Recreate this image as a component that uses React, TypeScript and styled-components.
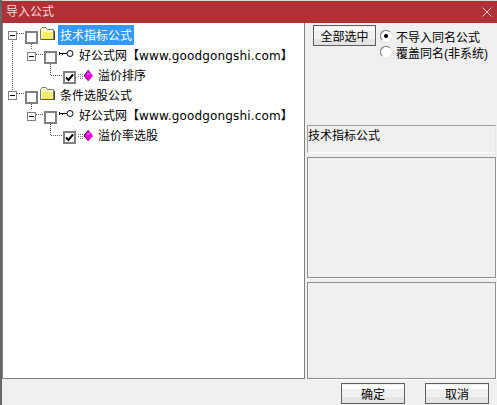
import React from "react";
import styled, { createGlobalStyle } from "styled-components";

const Global = createGlobalStyle`
  html, body { margin: 0; padding: 0; background: #f0f0f0; }
  body { font-family: "Liberation Sans", "Noto Sans CJK SC", sans-serif; font-size: 12px; color: #000; }
`;

const Window = styled.div`
  width: 497px;
  height: 405px;
  display: flex;
  flex-direction: column;
  overflow: hidden;
  background: #f0f0f0;
  border-left: 2px solid #666;
  box-sizing: border-box;
`;
const TopEdge = styled.div`
  height: 1px;
  flex: none;
  background: #d8d8d8;
`;
const TitleBar = styled.div`
  height: 22px;
  flex: none;
  margin-left: -2px;
  background: #b03036;
  color: #f4dcdc;
  display: flex;
  align-items: center;
  justify-content: space-between;
  padding: 0 5px 0 6px;
  line-height: 22px;
`;
const Body = styled.div`
  height: 356px;
  flex: none;
  display: flex;
`;
const Tree = styled.div`
  position: relative;
  width: 303px;
  flex: none;
  box-sizing: border-box;
  background: #fff;
  border-left: 1px solid #808080;
  border-right: 1px solid #808080;
  border-bottom: 1px solid #808080;
  padding-top: 2px;
  display: flex;
  flex-direction: column;
`;
const Row = styled.div<{ $level: number }>`
  height: 20px;
  flex: none;
  display: flex;
  align-items: flex-start;
  padding-left: ${(p) => [5, 24, 60][p.$level]}px;
`;
const Expander = styled.span<{ $top: number }>`
  width: 9px;
  height: 9px;
  box-sizing: border-box;
  flex: none;
  margin-top: ${(p) => p.$top}px;
  margin-right: 8px;
  border: 1px solid #808080;
  background: #fff;
  display: flex;
  align-items: center;
  justify-content: center;
  position: relative;
  z-index: 1;
  &::after { content: ""; width: 5px; height: 1px; background: #000; }
`;
const Check = styled.span`
  width: 13px;
  height: 13px;
  box-sizing: border-box;
  flex: none;
  margin-top: 6px;
  border: 2px solid #808080;
  background: #fff;
  position: relative;
  z-index: 1;
  display: flex;
  align-items: center;
  justify-content: center;
`;
const IconSlot = styled.span<{ $left: number; $top: number }>`
  flex: none;
  display: flex;
  margin-left: ${(p) => p.$left}px;
  margin-top: ${(p) => p.$top}px;
`;
const Label = styled.span<{ $selected?: boolean; $left: number }>`
  margin-left: ${(p) => p.$left}px;
  padding: 0 2px;
  height: 20px;
  line-height: 22px;
  white-space: nowrap;
  background: ${(p) => (p.$selected ? "#3399ff" : "transparent")};
  color: ${(p) => (p.$selected ? "#fff" : "#000")};
`;
const Latin = styled.span`
  font-family: "DejaVu Sans", sans-serif;
  font-size: 12px;
  letter-spacing: 0.15px;
`;
const Lines = styled.svg`
  position: absolute;
  left: 0;
  top: 0;
  width: 300px;
  height: 130px;
  pointer-events: none;
`;
const Side = styled.div`
  flex: 1;
  display: flex;
  flex-direction: column;
  padding: 2px 1px 0 2px;
  box-sizing: border-box;
`;
const Controls = styled.div`
  height: 100px;
  flex: none;
  display: flex;
  align-items: flex-start;
  padding-left: 6px;
`;
const Button = styled.button<{ $w: number }>`
  width: ${(p) => p.$w}px;
  height: 21px;
  flex: none;
  padding: 0;
  box-sizing: border-box;
  border: 1px solid #5f5f5f;
  border-radius: 0;
  font: inherit;
  color: #000;
  background: linear-gradient(#f0f0f0 0 1px, #fff 1px 5px, #f0f0f0 5px 13px, #e4e4e4 13px 19px, #f0f0f0 19px);
`;
const Radios = styled.div`
  margin-left: 4px;
  display: flex;
  flex-direction: column;
`;
const RadioRow = styled.label`
  height: 16px;
  display: flex;
  align-items: center;
  gap: 4px;
  white-space: nowrap;
`;
const Radio = styled.span<{ $on?: boolean }>`
  width: 12px;
  height: 12px;
  box-sizing: border-box;
  border-radius: 50%;
  background: #fff;
  border: 1px solid;
  border-color: #808080 #fff #fff #808080;
  box-shadow: 0 0 1px #999;
  display: flex;
  align-items: center;
  justify-content: center;
  &::after {
    content: "";
    width: 4px;
    height: 4px;
    border-radius: 50%;
    background: ${(p) => (p.$on ? "#000" : "transparent")};
  }
`;
const RadioStack = styled.div`
  padding-top: 3px;
`;
const InfoBox = styled.div`
  height: 28px;
  flex: none;
  box-sizing: border-box;
  border: 1px solid;
  border-color: #a0a0a0 #e8e8e8 #fff #a0a0a0;
  line-height: 20px;
  padding-left: 0;
`;
const Pane = styled.div<{ $h: number; $gap: number }>`
  height: ${(p) => p.$h}px;
  flex: none;
  margin-top: ${(p) => p.$gap}px;
  box-sizing: border-box;
  border: 1px solid #909090;
  box-shadow: 1px 1px 0 #fff;
`;
const Footer = styled.div`
  flex: 1;
  display: flex;
  justify-content: flex-end;
  align-items: flex-start;
  gap: 20px;
  padding: 4px 8px 0 0;
`;

const Folder = () => (
  <svg width="16" height="13" viewBox="0 0 16 13">
    <path d="M1.500 12.500V2.500L3 .5h4l1.500 2h6v10z" fill="#fbfbc8" stroke="#77776a" />
    <path d="M3 5h11v7H3z" fill="#eee000" opacity=".6" />
    <path d="M3 6h11M3 8h11M3 10h11" stroke="#fffbc0" strokeDasharray="1 1" />
    <path d="M15.500 4v9H2" stroke="#444" fill="none" />
  </svg>
);
const Key = () => (
  <svg width="15" height="8" viewBox="0 0 15 8">
    <path d="M1 3.500h7.500M.5 2v3M3.500 3.500v1.500" stroke="#000" fill="none" />
    <circle cx="11" cy="3.500" r="3" fill="#fff" stroke="#000" />
  </svg>
);
const Gem = () => (
  <svg width="15" height="13" viewBox="0 0 15 13">
    <path d="M0 5.500h6M0 7.500h6M2 9.500h4" stroke="#777" strokeDasharray="1 1" />
    <path d="M10.500 1 14.500 6v1.500L10.500 12 6.500 7.500V6z" fill="#e800d8" />
    <path d="M10.500 1 6.500 6v1.500L10.500 12" fill="none" stroke="#4a1070" />
    <path d="M9 5h3" stroke="#ff90f0" />
  </svg>
);
const Tick = () => (
  <svg width="9" height="9" viewBox="0 0 9 9">
    <path d="M1 4.500 3.500 7 8 1.500" fill="none" stroke="#000" strokeWidth="2" />
  </svg>
);
const Close = () => (
  <svg width="10" height="10" viewBox="0 0 10 10">
    <path d="M.5.500l9 9M9.500.500l-9 9" stroke="#e9c6c8" fill="none" />
  </svg>
);

const Site = () => (
  <>
    好公式网【<Latin>www.goodgongshi.com</Latin>】
  </>
);

export default function App() {
  return (
    <>
      <Global />
      <Window>
        <TopEdge />
        <TitleBar>
          <span>导入公式</span>
          <Close />
        </TitleBar>
        <Body>
          <Tree>
            <Lines viewBox="0 0 300 130">
              <g stroke="#555" strokeDasharray="1 1" fill="none">
                <path d="M9.500 16v52M14 10.500h8M28.500 19v8M33 31.500h8M47.500 39v13.500h13" />
                <path d="M14 70.500h8M28.500 79v8M33 91.500h8M47.500 99v13.500h13" />
              </g>
            </Lines>
            <Row $level={0}>
              <Expander $top={6} />
              <Check />
              <IconSlot $left={1} $top={2}><Folder /></IconSlot>
              <Label $selected $left={3}>技术指标公式</Label>
            </Row>
            <Row $level={1}>
              <Expander $top={7} />
              <Check />
              <IconSlot $left={2} $top={5}><Key /></IconSlot>
              <Label $left={3}><Site /></Label>
            </Row>
            <Row $level={2}>
              <Check><Tick /></Check>
              <IconSlot $left={2} $top={4}><Gem /></IconSlot>
              <Label $left={3}>溢价排序</Label>
            </Row>
            <Row $level={0}>
              <Expander $top={6} />
              <Check />
              <IconSlot $left={1} $top={2}><Folder /></IconSlot>
              <Label $left={3}>条件选股公式</Label>
            </Row>
            <Row $level={1}>
              <Expander $top={7} />
              <Check />
              <IconSlot $left={2} $top={5}><Key /></IconSlot>
              <Label $left={3}><Site /></Label>
            </Row>
            <Row $level={2}>
              <Check><Tick /></Check>
              <IconSlot $left={2} $top={4}><Gem /></IconSlot>
              <Label $left={3}>溢价率选股</Label>
            </Row>
          </Tree>
          <Side>
            <Controls>
              <Button $w={63}>全部选中</Button>
              <RadioStack>
                <Radios>
                  <RadioRow><Radio $on />不导入同名公式</RadioRow>
                  <RadioRow><Radio />覆盖同名(非系统)</RadioRow>
                </Radios>
              </RadioStack>
            </Controls>
            <InfoBox>技术指标公式</InfoBox>
            <Pane $h={121} $gap={4} />
            <Pane $h={97} $gap={4} />
          </Side>
        </Body>
        <Footer>
          <Button $w={64}>确定</Button>
          <Button $w={64}>取消</Button>
        </Footer>
      </Window>
    </>
  );
}
